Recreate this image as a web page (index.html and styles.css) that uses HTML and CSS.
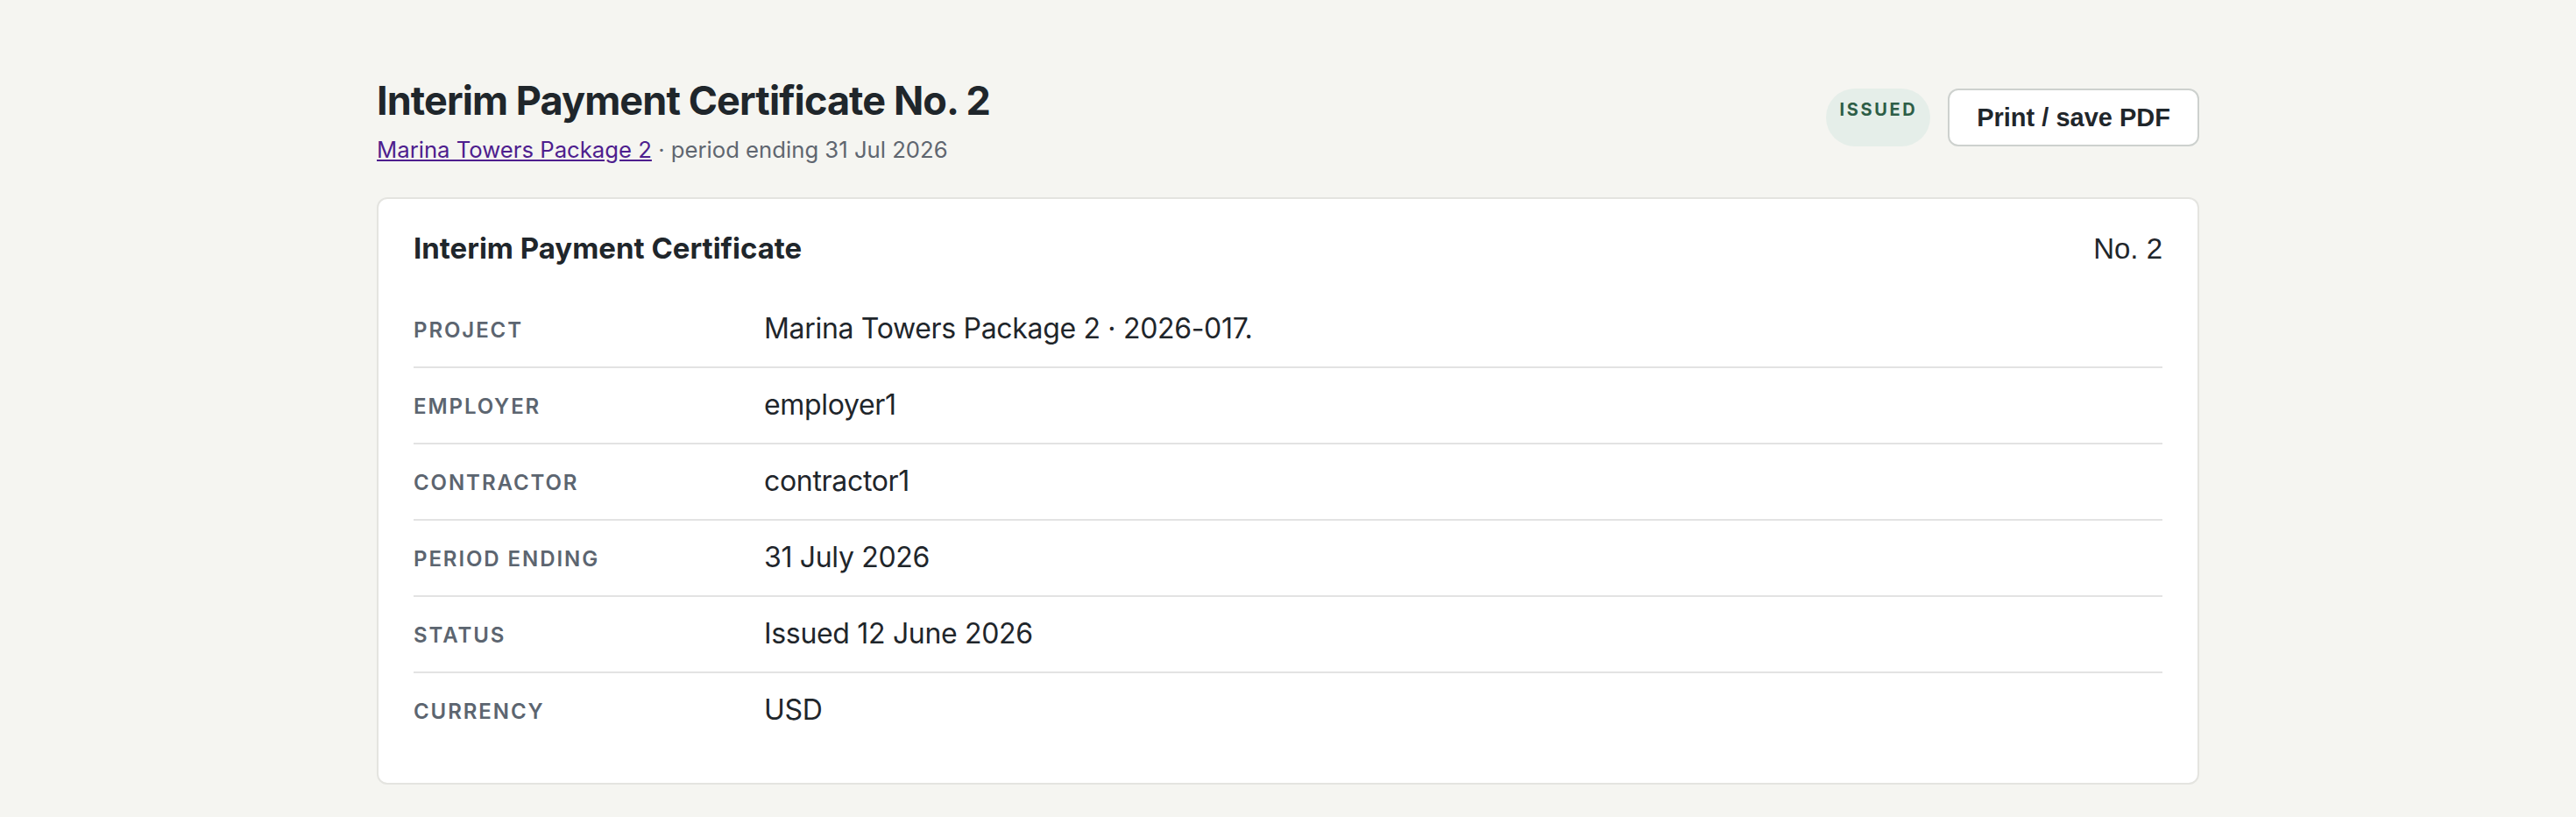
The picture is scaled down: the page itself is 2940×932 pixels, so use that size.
FILE: index.html
```html
<!DOCTYPE html>
<html lang="en">
<head>
    <meta charset="UTF-8">
    <meta name="viewport" content="width=device-width, initial-scale=1.0">
    <title>Interim Payment Certificate No. 2</title>
    <link rel="stylesheet" href="styles.css">
</head>
<body>
    <div class="page">
        <div class="page_head">
            <div>
                <h1>Interim Payment Certificate No. 2</h1>
                <p class="sub"><a href="#">Marina Towers Package 2</a> · period ending 31 Jul 2026</p>
            </div>
            <div class="actions">
                <span class="badge">ISSUED</span>
                <button class="print_btn" onclick="window.print();">Print / save PDF</button>
            </div>
        </div>

        <div class="card">
            <div class="card_head">
                <h2>Interim Payment Certificate</h2>
                <span class="cert_no">No. 2</span>
            </div>
            <div class="row">
                <span class="label">Project</span>
                <span class="value">Marina Towers Package 2 · 2026-017.</span>
            </div>
            <div class="row">
                <span class="label">Employer</span>
                <span class="value">employer1</span>
            </div>
            <div class="row">
                <span class="label">Contractor</span>
                <span class="value">contractor1</span>
            </div>
            <div class="row">
                <span class="label">Period ending</span>
                <span class="value">31 July 2026</span>
            </div>
            <div class="row">
                <span class="label">Status</span>
                <span class="value">Issued 12 June 2026</span>
            </div>
            <div class="row">
                <span class="label">Currency</span>
                <span class="value">USD</span>
            </div>
        </div>
    </div>
</body>
</html>
```

FILE: styles.css
```css
body {
    margin: 0;
    background-color: #f5f5f1;
    color: #1f262b;
    font-family: Inter, "Noto Sans", sans-serif;
}

.page {
    max-width: 2080px;
    margin: 0 auto;
    padding-top: 88px;
}

.page_head {
    display: flex;
    justify-content: space-between;
    align-items: flex-start;
    margin-bottom: 35px;
}

h1 {
    margin: 0 0 10px;
    font-size: 45px;
    line-height: 54px;
    font-weight: 700;
    letter-spacing: -0.02em;
}

.sub {
    margin: 0;
    font-size: 25.7px;
    line-height: 38px;
    color: #5f6670;
}

    .sub a {
        color: #4e1e8e;
    }

.actions {
    display: flex;
    gap: 20px;
    margin-top: 13px;
}

.badge {
    padding: 12px 15px 0 16px;
    border-radius: 999px;
    background-color: #e5eee9;
    color: #2e5e47;
    font-size: 20px;
    line-height: 24px;
    font-weight: 700;
    letter-spacing: 2.6px;
}

.print_btn {
    height: 66px;
    padding: 0 31px;
    background-color: #fff;
    color: #1f262b;
    border: 2px solid #cdd1ce;
    border-radius: 12px;
    font-family: "Liberation Sans", Arial, sans-serif;
    font-size: 29px;
    font-weight: 700;
    cursor: pointer;
}

.card {
    background-color: #fff;
    border: 2px solid #e4e4e0;
    border-radius: 12px;
    padding: 37px 40px 40px;
}

.card_head {
    display: flex;
    justify-content: space-between;
    align-items: baseline;
    margin-bottom: 30px;
}

    .card_head h2 {
        margin: 0;
        font-size: 33px;
        line-height: 38px;
        font-weight: 700;
        letter-spacing: 0;
    }

.cert_no {
    font-family: "Liberation Sans", Arial, sans-serif;
    font-size: 33px;
}

.row {
    display: grid;
    grid-template-columns: 400px 1fr;
    align-items: baseline;
    padding: 18px 0 19px;
    border-bottom: 2px solid #e3e3e3;
}

    .row:last-child {
        border-bottom: none;
    }

.label {
    position: relative;
    top: -1px;
    font-size: 24px;
    font-weight: 600;
    letter-spacing: 0.08em;
    text-transform: uppercase;
    color: #5c6570;
}

.value {
    font-size: 32px;
    line-height: 48px;
    letter-spacing: -0.01em;
}
```
